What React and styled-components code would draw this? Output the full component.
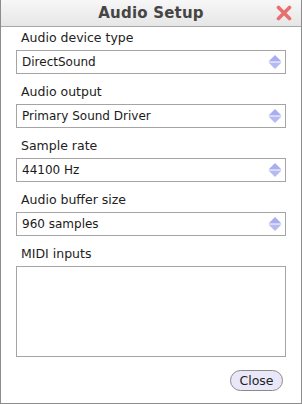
import React from 'react';
import styled, { createGlobalStyle } from 'styled-components';

const Global = createGlobalStyle`
  html, body {
    margin: 0;
    padding: 0;
    background: #ffffff;
  }
  body {
    font-family: "DejaVu Sans", Verdana, sans-serif;
  }
`;

const Window = styled.div`
  width: 302px;
  height: 404px;
  box-sizing: border-box;
  border: 1px solid #8c8c8c;
  border-top: none;
  background: #fff;
  display: flex;
  flex-direction: column;
`;

const TitleBar = styled.div`
  height: 26px;
  border-bottom: 1px solid #a8a8a8;
  background: linear-gradient(#f7f7f7, #e6e6e6);
  display: grid;
  grid-template-columns: 1fr auto 1fr;
  align-items: center;
`;

const Title = styled.div`
  grid-column: 2;
  font-size: 15px;
  font-weight: bold;
  color: #454545;
  letter-spacing: 0.2px;
`;

const CloseX = styled.div`
  grid-column: 3;
  justify-self: end;
  margin-right: 9px;
  display: flex;
`;

const Body = styled.div`
  flex: 1;
  padding: 0 15px;
  display: flex;
  flex-direction: column;
`;

const Field = styled.div`
  display: flex;
  flex-direction: column;
  margin-top: ${p => (p.first ? '0' : '7px')};
`;

const Label = styled.div`
  height: 23px;
  box-sizing: border-box;
  display: flex;
  align-items: flex-end;
  padding: 0 0 5px 5px;
  font-size: 12.5px;
  color: #222;
`;

const Select = styled.div`
  height: 24px;
  box-sizing: border-box;
  border: 1px solid #a4a4a4;
  display: flex;
  align-items: center;
  justify-content: space-between;
  padding: 0 3px 0 5px;
  font-size: 12px;
  color: #1a1a1a;
`;

const ListBox = styled.div`
  height: 91px;
  box-sizing: border-box;
  border: 1px solid #a4a4a4;
`;

const Footer = styled.div`
  display: flex;
  justify-content: flex-end;
  padding: 13px 3px 0 0;
`;

const Button = styled.button`
  width: 53px;
  height: 21px;
  border: 1px solid #8a8a8a;
  border-radius: 11px;
  background: #e9e8f9;
  font-family: "DejaVu Sans", Verdana, sans-serif;
  font-size: 12.5px;
  color: #222;
  padding: 0;
`;

const Spinner = () => (
  <svg width="14" height="16" viewBox="0 0 14 16">
    <polygon points="7,1 13.5,7.5 0.5,7.5" fill="#a9aef0" />
    <polygon points="0.5,8.5 13.5,8.5 7,15" fill="#b6baf2" />
  </svg>
);

const XIcon = () => (
  <svg width="16" height="16" viewBox="0 0 16 16">
    <path d="M2.5 2.5 L13.5 13.5 M13.5 2.5 L2.5 13.5" stroke="#e7706f" strokeWidth="3.6" strokeLinecap="round" />
  </svg>
);

const fields = [
  { label: 'Audio device type', value: 'DirectSound' },
  { label: 'Audio output', value: 'Primary Sound Driver' },
  { label: 'Sample rate', value: '44100 Hz' },
  { label: 'Audio buffer size', value: '960 samples' },
];

export default function App() {
  return (
    <>
      <Global />
      <Window>
        <TitleBar>
          <Title>Audio Setup</Title>
          <CloseX><XIcon /></CloseX>
        </TitleBar>
        <Body>
          {fields.map((f, i) => (
            <Field key={f.label} first={i === 0}>
              <Label>{f.label}</Label>
              <Select>
                <span>{f.value}</span>
                <Spinner />
              </Select>
            </Field>
          ))}
          <Field>
            <Label>MIDI inputs</Label>
            <ListBox />
          </Field>
          <Footer>
            <Button>Close</Button>
          </Footer>
        </Body>
      </Window>
    </>
  );
}
